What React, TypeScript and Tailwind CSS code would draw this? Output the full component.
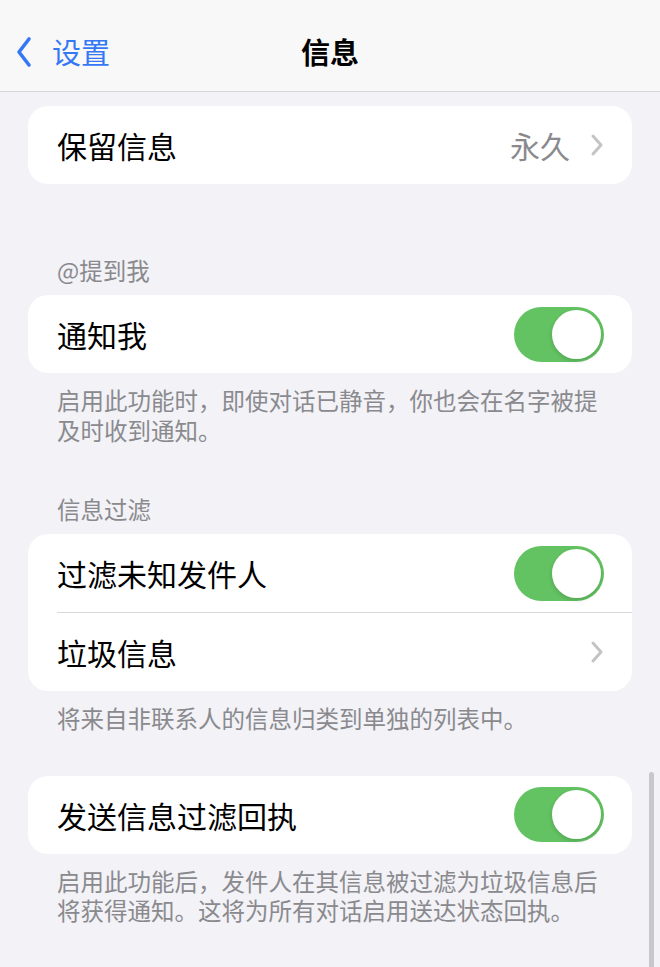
import React from "react";

const font = { fontFamily: '"Noto Sans CJK SC", "Noto Sans", sans-serif' };

function Chevron() {
  return (
    <svg width="14" height="24" viewBox="0 0 14 24" fill="none">
      <path d="M3 3 L11 12 L3 21" stroke="#c4c4c7" strokeWidth="3" strokeLinecap="round" strokeLinejoin="round" />
    </svg>
  );
}

function Toggle() {
  return (
    <div className="w-[90px] h-[55px] rounded-full bg-[#63c262] flex items-center justify-end p-[3px]">
      <div className="w-[49px] h-[49px] rounded-full bg-white shadow-[0_2px_4px_rgba(0,0,0,0.15)]" />
    </div>
  );
}

function Row({ label, right }: { label: string; right?: React.ReactNode }) {
  return (
    <div className="h-[78px] flex items-center justify-between pl-[29px] pr-[28px]">
      <span className="text-[30px] leading-none text-black">{label}</span>
      {right}
    </div>
  );
}

function Header({ text, mt }: { text: string; mt: string }) {
  return (
    <div className={`${mt} px-[57px] text-[23.5px] leading-[30px] text-[#8a8a8e] mb-[10px]`}>{text}</div>
  );
}

function Footer({ lines, mt }: { lines: string[]; mt: string }) {
  return (
    <div className={`${mt} px-[57px] text-[23.5px] text-[#8a8a8e] flex flex-col`}>
      {lines.map((l) => (
        <div key={l} className="h-[29.5px] leading-[29.5px] whitespace-nowrap">
          {l}
        </div>
      ))}
    </div>
  );
}

export default function App() {
  return (
    <div className="relative w-[660px] h-[967px] overflow-hidden bg-[#f2f2f7]" style={font}>
      <div className="h-[92px] pt-[12px] bg-[#f8f8f8] border-b border-[#d6d6d8] flex items-center relative">
        <div className="flex items-center pl-[16px] text-[#3478f6]">
          <svg width="16" height="32" viewBox="0 0 16 32" fill="none">
            <path d="M13 3 L3 16 L13 29" stroke="#3478f6" strokeWidth="3.6" strokeLinecap="round" strokeLinejoin="round" />
          </svg>
          <span className="ml-[20px] text-[29px] leading-none">设置</span>
        </div>
        <div className="absolute left-0 right-0 text-center text-[29px] font-semibold leading-none text-black pointer-events-none">信息</div>
      </div>

      <div className="mx-[28px] mt-[14px] bg-white rounded-[20px]">
        <Row
          label="保留信息"
          right={
            <div className="flex items-center gap-[20px]">
              <span className="text-[30px] leading-none text-[#8a8a8e]">永久</span>
              <Chevron />
            </div>
          }
        />
      </div>

      <Header text="@提到我" mt="mt-[71px]" />
      <div className="mx-[28px] bg-white rounded-[20px]">
        <Row label="通知我" right={<Toggle />} />
      </div>
      <Footer mt="mt-[13px]" lines={["启用此功能时，即使对话已静音，你也会在名字被提", "及时收到通知。"]} />

      <Header text="信息过滤" mt="mt-[49px]" />
      <div className="mx-[28px] bg-white rounded-[20px]">
        <Row label="过滤未知发件人" right={<Toggle />} />
        <div className="ml-[29px] h-px bg-[#d8d8dc]" />
        <Row label="垃圾信息" right={<Chevron />} />
      </div>
      <Footer mt="mt-[13px]" lines={["将来自非联系人的信息归类到单独的列表中。"]} />

      <div className="mx-[28px] mt-[42px] bg-white rounded-[20px]">
        <Row label="发送信息过滤回执" right={<Toggle />} />
      </div>
      <Footer
        mt="mt-[13px]"
        lines={["启用此功能后，发件人在其信息被过滤为垃圾信息后", "将获得通知。这将为所有对话启用送达状态回执。"]}
      />

      <div className="absolute right-[6px] top-[772px] w-[5px] h-[200px] rounded-full bg-[#c7c7cc]" />
    </div>
  );
}
